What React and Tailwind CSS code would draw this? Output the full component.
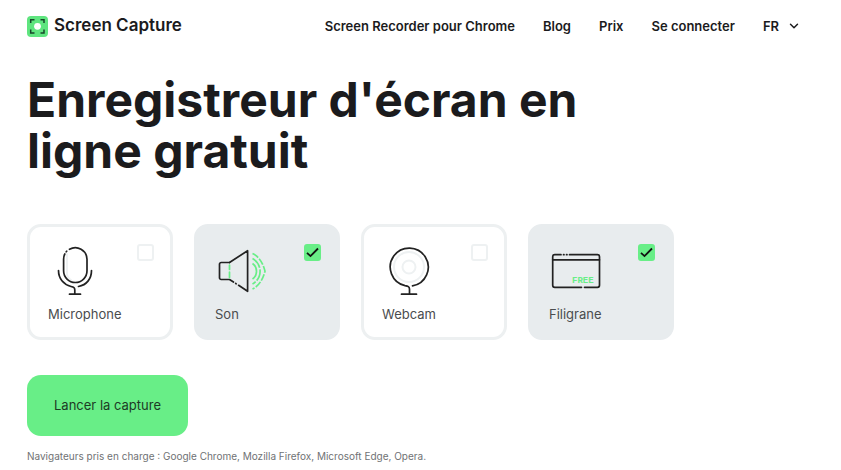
import { useState } from 'react';
import { ChevronDown } from 'lucide-react';

const NAV_LINKS = ['Screen Recorder pour Chrome', 'Blog', 'Prix', 'Se connecter'];

function LogoMark() {
  return (
    <svg viewBox="0 0 21 21" className="h-[21px] w-[21px]" fill="none" aria-hidden="true">
      <rect width="21" height="21" rx="4" fill="#5fe57f" />
      <path
        d="M3.7 7V3.7H7.5M13.5 3.7H17V7M17 13.5V17H13.5M7.5 17H3.7V13.5"
        stroke="#17462a"
        strokeWidth="1.5"
      />
      <circle cx="10.5" cy="10.3" r="3.4" fill="#fff" />
    </svg>
  );
}

function MicrophoneIcon() {
  return (
    <>
      <path d="M19 8v18a8 8 0 0 0 4 8" stroke="#eef1f2" strokeWidth="2" />
      <path d="M21.5 3.3A11.7 11.7 0 0 1 39 13.2v11.6a11.7 11.7 0 0 1-23.4 0V13.2c0-2 .5-3.9 1.2-5.2" />
      <path d="M18.2 5.8l.5-.6" />
      <path d="M10.5 24.5c0 8 5 14 12.5 16 2.8.7 3.8 1 3.8 3.5v4" />
      <path d="M43.5 24.5c0 8.5-5 14.5-13 16" />
      <path d="M21.5 48.2h11" />
    </>
  );
}

function SoundIcon() {
  return (
    <>
      <path d="M14.5 16.5H6.2a1.7 1.7 0 0 0-1.7 1.7v13.6a1.7 1.7 0 0 0 1.7 1.7h8.3l4 2.5" />
      <path d="M14.5 16.5L32.6 4.7v40.6l-9-6" />
      <path d="M20.7 37.4l.5.4" />
      <path d="M14.5 19v4.5M14.5 26v5.5" stroke="#68ee87" />
      <g stroke="#68ee87" strokeWidth="1.7" strokeLinecap="butt">
        <path d="M37.5 7.5C44 10.5 48 17 50 25.300 48 33 44 40 37.5 43" strokeDasharray="7 1.5" />
        <path d="M37.5 12.5a14.5 14.5 0 0 1 0 25.5" strokeDasharray="12 1.5" />
        <path d="M37.5 17.5a9.5 9.5 0 0 1 0 15.5" />
      </g>
    </>
  );
}

function WebcamIcon() {
  return (
    <>
      <g stroke="#eef1f2" strokeWidth="2">
        <circle cx="27" cy="21" r="15" />
        <circle cx="27" cy="21" r="6.5" />
      </g>
      <path d="M30.5 39.8A19 19 0 1 0 23 39.6c3 .6 4.5.9 4.5 3.7V48" />
      <path d="M19.5 48.2h15" />
    </>
  );
}

function WatermarkIcon() {
  return (
    <>
      <path d="M12 8.7H5.7a2 2 0 0 0-2 2v28.6a2 2 0 0 0 2 2H32.5M35.5 41.3h13a2 2 0 0 0 2-2V10.7a2 2 0 0 0-2-2H20.5" />
      <path d="M14.5 8.7h.5M17.5 8.7h.5" />
      <path d="M3.7 13.8h46.8" />
      <text
        x="23"
        y="37"
        fill="#68ee87"
        stroke="none"
        className="font-['Liberation_Mono',monospace] text-[9px] font-bold"
      >
        FREE
      </text>
    </>
  );
}

const OPTIONS = [
  { id: 'microphone', label: 'Microphone', icon: MicrophoneIcon },
  { id: 'sound', label: 'Son', icon: SoundIcon },
  { id: 'webcam', label: 'Webcam', icon: WebcamIcon },
  { id: 'watermark', label: 'Filigrane', icon: WatermarkIcon },
];

function OptionCard({ id, label, icon: Icon, checked, onToggle }) {
  return (
    <label
      htmlFor={id}
      className={`flex min-h-[116px] w-[146px] cursor-pointer flex-col rounded-[14px] border-[3px] pt-[17px] pr-[16px] pl-[18px] ${
        checked ? 'border-[#e8ecee] bg-[#e8ecee]' : 'border-[#edf0f1] bg-white'
      }`}
    >
      <span className="flex items-start justify-between">
        <svg
          viewBox="0 0 52 50"
          className="mt-[2px] h-[50px] w-[52px]"
          fill="none"
          stroke="#222"
          strokeWidth="1.7"
          strokeLinecap="round"
          strokeLinejoin="round"
          aria-hidden="true"
        >
          <Icon />
        </svg>
        <span className="grid h-[17px] w-[17px]">
          <input
            id={id}
            type="checkbox"
            checked={checked}
            onChange={() => onToggle(id)}
            className="col-start-1 row-start-1 h-[17px] w-[17px] appearance-none rounded-[3px] border-2 border-[#eef1f2] bg-white checked:border-[#68ee87] checked:bg-[#68ee87]"
          />
          {checked && (
            <svg
              viewBox="0 0 17 17"
              className="pointer-events-none col-start-1 row-start-1 h-[17px] w-[17px]"
              fill="none"
              stroke="#111"
              strokeWidth="1.8"
              aria-hidden="true"
            >
              <path d="M3 8.8l3.5 3.3 7.5-7.6" />
            </svg>
          )}
        </span>
      </span>
      <span className="mt-[8px] text-[13px] leading-[20px] text-[#4a4c4e]">{label}</span>
    </label>
  );
}

export default function App() {
  const [selected, setSelected] = useState({ sound: true, watermark: true });

  const toggle = (id) => setSelected((prev) => ({ ...prev, [id]: !prev[id] }));

  return (
    <div className="min-h-screen bg-white font-['Inter',sans-serif] text-[#1b1b1d]">
      <header className="flex h-[52px] items-center justify-between pr-[40px] pl-[27px]">
        <a href="#" className="flex items-center gap-[6px] text-[17px] font-semibold">
          <LogoMark />
          Screen Capture
        </a>
        <nav className="flex items-center gap-[28px] text-[13px] leading-[20px] font-semibold">
          {NAV_LINKS.map((link) => (
            <a key={link} href="#">
              {link}
            </a>
          ))}
          <button type="button" className="flex items-center gap-[8px]">
            FR
            <ChevronDown className="h-[14px] w-[14px]" strokeWidth={2.5} />
          </button>
        </nav>
      </header>

      <main className="px-[27px]">
        <h1 className="mt-[22px] max-w-[600px] text-[48px] leading-[51px] font-bold">
          Enregistreur d'écran en ligne gratuit
        </h1>

        <div className="mt-[48px] flex flex-wrap gap-[21px]">
          {OPTIONS.map((option) => (
            <OptionCard
              key={option.id}
              {...option}
              checked={!!selected[option.id]}
              onToggle={toggle}
            />
          ))}
        </div>

        <button
          type="button"
          className="mt-[35px] rounded-[14px] bg-[#68ee87] px-[27px] py-[20px] text-[13px] leading-[21px] text-[#1d3b25]"
        >
          Lancer la capture
        </button>

        <p className="mt-[12px] text-[10px] leading-[16px] text-[#707274]">
          Navigateurs pris en charge : Google Chrome, Mozilla Firefox, Microsoft Edge, Opera.
        </p>
      </main>
    </div>
  );
}
